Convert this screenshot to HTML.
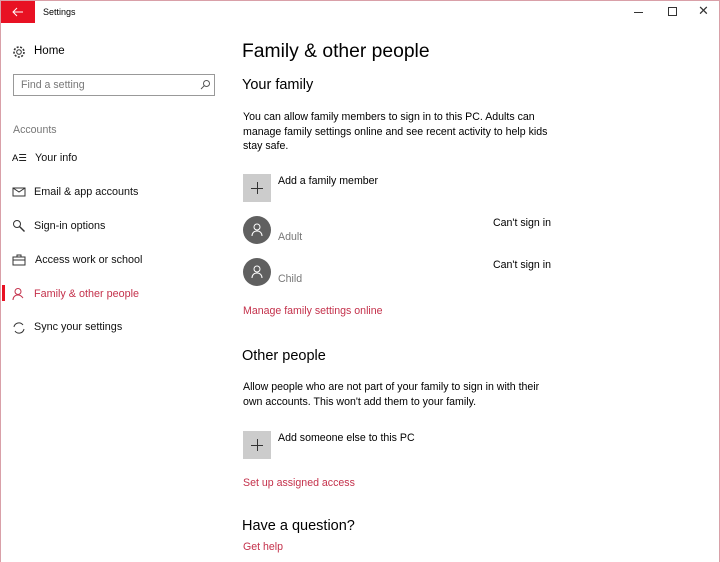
<!DOCTYPE html>
<html><head><style>
*{margin:0;padding:0;box-sizing:border-box}
body{width:720px;height:562px;background:#fff;font-family:"Liberation Sans",sans-serif;color:#000;position:relative;overflow:hidden;border:1px solid #d9a0a8;border-bottom:none}
.a{position:absolute;white-space:nowrap}
.s{font-size:10.6px}
.n{font-size:10.8px;color:#111}
.red{color:#c4314b}
.gray{color:#777}
.ic{position:absolute;left:11px;width:14px;height:14px}
.plus{position:absolute;width:28px;height:28px;background:#ccc;left:242px}
.plus:before{content:"";position:absolute;left:8px;top:13.5px;width:12px;height:1px;background:#333}
.plus:after{content:"";position:absolute;left:13.5px;top:8px;width:1px;height:12px;background:#333}
.av{position:absolute;left:242px;width:28px;height:28px;border-radius:50%;background:#606060}
</style></head><body>
<div class="a" style="left:0;top:0;width:34px;height:22px;background:#e81123"></div>
<svg class="a" style="left:11px;top:5px" width="12" height="12" viewBox="0 0 12 12"><path d="M11 6H1M5 2L1 6l4 4" stroke="#fff" fill="none" stroke-width="1"/></svg>
<div class="a" style="left:42px;top:6px;font-size:9px">Settings</div>
<div class="a" style="left:633px;top:11px;width:9px;height:1px;background:#333"></div>
<div class="a" style="left:667px;top:6px;width:9px;height:9px;border:1px solid #333"></div>
<div class="a" style="left:697px;top:2px;font-size:13px;color:#333">✕</div>

<svg class="ic" style="top:44px" viewBox="0 0 14 14"><circle cx="7" cy="7" r="2.3" fill="none" stroke="#333"/><circle cx="7" cy="7" r="5" fill="none" stroke="#333" stroke-dasharray="2 1.5" stroke-width="1.6"/></svg>
<div class="a" style="left:33px;top:44px;font-size:11.5px">Home</div>
<div class="a" style="left:12px;top:73px;width:202px;height:22px;border:1px solid #999"></div>
<div class="a s" style="left:20px;top:78px;color:#777">Find a setting</div>
<svg class="a" style="left:199px;top:78px" width="11" height="11" viewBox="0 0 11 11"><circle cx="6.5" cy="4.5" r="3" fill="none" stroke="#555"/><path d="M4.3 6.7L1 10" stroke="#555"/></svg>
<div class="a s gray" style="left:12px;top:123px">Accounts</div>

<div class="a" style="left:11px;top:152px;font-size:9.5px">A☰</div>
<div class="a n" style="left:34px;top:151px">Your info</div>
<svg class="ic" style="top:184px" viewBox="0 0 14 14"><rect x="1" y="3" width="12" height="8" fill="none" stroke="#333"/><path d="M1 3l6 4 6-4" fill="none" stroke="#333"/></svg>
<div class="a n" style="left:33px;top:185px">Email &amp; app accounts</div>
<svg class="ic" style="top:218px" viewBox="0 0 14 14"><circle cx="5" cy="5" r="3.5" fill="none" stroke="#333"/><path d="M7.5 7.5l5 5" stroke="#333" stroke-width="1.4"/></svg>
<div class="a n" style="left:33px;top:219px">Sign-in options</div>
<svg class="ic" style="top:252px" viewBox="0 0 14 14"><rect x="1" y="4" width="12" height="8" fill="none" stroke="#333"/><path d="M5 4V2h4v2M1 7h12" fill="none" stroke="#333"/></svg>
<div class="a n" style="left:34px;top:253px">Access work or school</div>
<div class="a" style="left:1px;top:284px;width:3px;height:16px;background:#e81123"></div>
<svg class="ic" style="top:286px" viewBox="0 0 14 14"><circle cx="6" cy="4.5" r="3" fill="none" stroke="#c4314b"/><path d="M1 13c0-3 2-5 5-5s4 2 5 3" fill="none" stroke="#c4314b"/></svg>
<div class="a n red" style="left:33px;top:287px">Family &amp; other people</div>
<svg class="ic" style="top:320px" viewBox="0 0 14 14"><path d="M2 6a5 5 0 0 1 9-2M12 8a5 5 0 0 1-9 2" fill="none" stroke="#333"/></svg>
<div class="a n" style="left:33px;top:320px">Sync your settings</div>

<div class="a" style="left:241px;top:40px;font-size:19.3px">Family &amp; other people</div>
<div class="a" style="left:241px;top:76px;font-size:14.5px">Your family</div>
<div class="a s" style="left:242px;top:109px;line-height:14.5px">You can allow family members to sign in to this PC. Adults can<br>manage family settings online and see recent activity to help kids<br>stay safe.</div>
<div class="plus" style="top:173px"></div>
<div class="a s" style="left:277px;top:174px">Add a family member</div>
<div class="av" style="top:215px"></div>
<svg class="a" style="left:250px;top:222px" width="12" height="14" viewBox="0 0 12 14"><circle cx="6" cy="4" r="3" fill="none" stroke="#fff"/><path d="M1 13c0-3 2-5 5-5s5 2 5 5" fill="none" stroke="#fff"/></svg>
<div class="a s gray" style="left:277px;top:230px">Adult</div>
<div class="a s" style="left:492px;top:216px">Can't sign in</div>
<div class="av" style="top:257px"></div>
<svg class="a" style="left:250px;top:264px" width="12" height="14" viewBox="0 0 12 14"><circle cx="6" cy="4" r="3" fill="none" stroke="#fff"/><path d="M1 13c0-3 2-5 5-5s5 2 5 5" fill="none" stroke="#fff"/></svg>
<div class="a s gray" style="left:277px;top:272px">Child</div>
<div class="a s" style="left:492px;top:258px">Can't sign in</div>
<div class="a s red" style="left:242px;top:304px">Manage family settings online</div>

<div class="a" style="left:241px;top:347px;font-size:14.5px">Other people</div>
<div class="a s" style="left:242px;top:379px;line-height:14.5px">Allow people who are not part of your family to sign in with their<br>own accounts. This won't add them to your family.</div>
<div class="plus" style="top:430px"></div>
<div class="a s" style="left:277px;top:431px">Add someone else to this PC</div>
<div class="a s red" style="left:242px;top:476px">Set up assigned access</div>
<div class="a" style="left:241px;top:517px;font-size:14.5px">Have a question?</div>
<div class="a s red" style="left:242px;top:540px">Get help</div>
</body></html>
